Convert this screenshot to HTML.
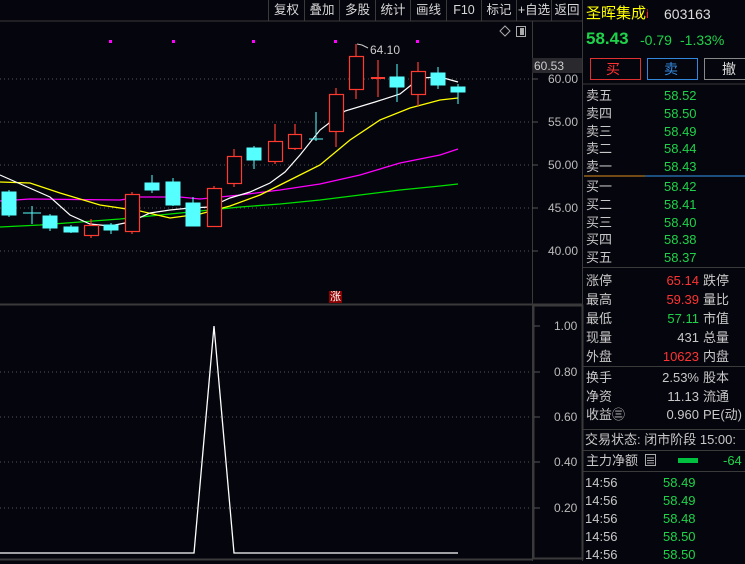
<!DOCTYPE html>
<html><head><meta charset="utf-8"><style>
*{margin:0;padding:0;box-sizing:border-box}
body{width:745px;height:561px;background:#05050d;overflow:hidden;position:relative;font-family:"Liberation Sans","Noto Sans CJK SC",sans-serif;font-size:13px;color:#c8c8c8}
.a{position:absolute;white-space:nowrap;line-height:16px}
.g{color:#1ed34a}.r{color:#ff3333}.w{color:#d0d0d0}
.tb{position:absolute;top:0;height:21px;line-height:20px;font-size:12.5px;color:#d8d8d8;text-align:center;border-left:1px solid #3a3a3a}
</style></head><body>
<svg class="a" style="left:0;top:0" width="745" height="561" xmlns="http://www.w3.org/2000/svg">
<g stroke="#555" stroke-dasharray="1,3">
<line x1="0" y1="79" x2="532" y2="79"/><line x1="0" y1="122" x2="532" y2="122"/><line x1="0" y1="165" x2="532" y2="165"/><line x1="0" y1="208" x2="532" y2="208"/><line x1="0" y1="251" x2="532" y2="251"/>
<line x1="0" y1="372" x2="532" y2="372"/><line x1="0" y1="417" x2="532" y2="417"/><line x1="0" y1="462" x2="532" y2="462"/><line x1="0" y1="508" x2="532" y2="508"/>
</g>
<line x1="0" y1="21" x2="582" y2="21" stroke="#3a3a3a"/>
<line x1="532.5" y1="21" x2="532.5" y2="561" stroke="#3a3a3a"/>
<line x1="582.5" y1="0" x2="582.5" y2="561" stroke="#3a3a3a"/>
<line x1="0" y1="304.5" x2="582" y2="304.5" stroke="#3a3a3a" stroke-width="2"/>
<rect x="533.5" y="305.5" width="49" height="253" fill="none" stroke="#3a3a3a" stroke-width="2"/>
<line x1="0" y1="559.5" x2="532" y2="559.5" stroke="#3a3a3a" stroke-width="2"/>
<rect x="532" y="58" width="50" height="15" fill="#2a2a2e"/>
<g stroke="#555"><line x1="532" y1="79" x2="538" y2="79"/><line x1="532" y1="122" x2="538" y2="122"/><line x1="532" y1="165" x2="538" y2="165"/><line x1="532" y1="208" x2="538" y2="208"/><line x1="532" y1="251" x2="538" y2="251"/></g>
<!-- MAs -->
<polyline fill="none" stroke="#00e000" stroke-width="1.3" points="0,227 40,225 80,222 120,219 160,215 200,211 240,207 280,204 320,200 360,195 400,190 440,186 458,184"/>
<polyline fill="none" stroke="#ff00ff" stroke-width="1.3" points="0,201 30,199 120,200 140,197 180,197 200,199 240,195 280,190 320,184 360,175 400,163 440,155 458,149"/>
<polyline fill="none" stroke="#ffff00" stroke-width="1.3" points="0,182 30,183 60,193 100,205 140,211 170,218 185,216 200,214 230,206 260,195 290,180 320,165 350,140 380,120 410,108 440,100 458,98"/>
<polyline fill="none" stroke="#ffffff" stroke-width="1.2" points="0,175 25,186 50,197 70,215 90,224 110,226 130,222 150,213 170,210 190,208 210,207 230,198 250,192 270,183 285,172 300,155 320,130 345,111 375,102 400,94 420,78 440,77 458,82"/>
<!-- candles -->
<g stroke="#5ff" fill="#5ff">
<line x1="9" y1="190" x2="9" y2="217"/><rect x="2" y="192" width="14" height="23"/>
<line x1="23" y1="213" x2="41" y2="213"/><line x1="32" y1="206" x2="32" y2="224"/>
<line x1="50" y1="214" x2="50" y2="231"/><rect x="43" y="216" width="14" height="12"/>
<line x1="71" y1="225" x2="71" y2="233"/><rect x="64" y="227" width="14" height="5"/>
<line x1="111" y1="223" x2="111" y2="234"/><rect x="104" y="225" width="14" height="5"/>
<line x1="152" y1="175" x2="152" y2="193"/><rect x="145" y="183" width="14" height="7"/>
<line x1="173" y1="178" x2="173" y2="206"/><rect x="166" y="182" width="14" height="23"/>
<line x1="193" y1="197" x2="193" y2="226"/><rect x="186" y="203" width="14" height="23"/>
<line x1="254" y1="146" x2="254" y2="169"/><rect x="247" y="148" width="14" height="12"/>
<line x1="309" y1="139" x2="323" y2="139"/><line x1="316" y1="112" x2="316" y2="141"/>
<line x1="397" y1="64" x2="397" y2="102"/><rect x="390" y="77" width="14" height="10"/>
<line x1="438" y1="67" x2="438" y2="89"/><rect x="431" y="73" width="14" height="12"/>
<line x1="458" y1="84" x2="458" y2="104"/><rect x="451" y="87" width="14" height="5"/>
</g>
<g stroke="#ff3b30" fill="#05050d" stroke-width="1.2">
<line x1="91" y1="219" x2="91" y2="238"/><rect x="84.5" y="225.5" width="14" height="10"/>
<line x1="132" y1="192" x2="132" y2="234"/><rect x="125.5" y="194.5" width="14" height="37"/>
<line x1="214" y1="186" x2="214" y2="227"/><rect x="207.5" y="188.5" width="14" height="38"/>
<line x1="234" y1="149" x2="234" y2="187"/><rect x="227.5" y="156.5" width="14" height="27"/>
<line x1="275" y1="124" x2="275" y2="164"/><rect x="268.5" y="141.5" width="14" height="20"/>
<line x1="295" y1="124" x2="295" y2="150"/><rect x="288.5" y="134.5" width="13" height="14"/>
<line x1="336" y1="88" x2="336" y2="147"/><rect x="329.5" y="94.5" width="14" height="37"/>
<line x1="356" y1="44" x2="356" y2="99"/><rect x="349.5" y="56.5" width="14" height="33"/>
<line x1="378" y1="60" x2="378" y2="97"/><line x1="371" y1="78" x2="385" y2="78" stroke-width="2"/>
<line x1="418" y1="62" x2="418" y2="106"/><rect x="411.5" y="71.5" width="14" height="23"/>
</g>
<polyline points="357,44 362,45 368,48" fill="none" stroke="#ccc"/>
<g fill="#f0f"><rect x="109" y="40" width="3" height="3"/><rect x="172" y="40" width="3" height="3"/><rect x="252" y="40" width="3" height="3"/><rect x="334" y="40" width="3" height="3"/><rect x="416" y="40" width="3" height="3"/></g>
<path d="M505 26 L510 31 L505 36 L500 31Z" fill="none" stroke="#aaa"/>
<rect x="516.5" y="26.5" width="9" height="10" fill="none" stroke="#aaa"/><rect x="520" y="28" width="4" height="7" fill="#aaa"/>
<rect x="329" y="291" width="13" height="12" fill="#8b0000"/>
<!-- indicator -->
<polyline fill="none" stroke="#fff" stroke-width="1.3" points="0,553 194,553 214,326 234,553 458,553"/>
<g stroke="#555"><line x1="534" y1="326" x2="540" y2="326"/><line x1="534" y1="372" x2="540" y2="372"/><line x1="534" y1="417" x2="540" y2="417"/><line x1="534" y1="462" x2="540" y2="462"/><line x1="534" y1="508" x2="540" y2="508"/></g>
<!-- right panel lines -->
<line x1="583" y1="84" x2="745" y2="84" stroke="#3a3a3a"/>
<line x1="584" y1="176" x2="645" y2="176" stroke="#e09020"/><line x1="645" y1="176" x2="745" y2="176" stroke="#3399ee"/>
<line x1="583" y1="267.5" x2="745" y2="267.5" stroke="#3a3a3a"/>
<line x1="583" y1="366.5" x2="745" y2="366.5" stroke="#3a3a3a"/>
<line x1="583" y1="429.5" x2="745" y2="429.5" stroke="#3a3a3a"/>
<line x1="583" y1="450.5" x2="745" y2="450.5" stroke="#3a3a3a"/>
<line x1="583" y1="471.5" x2="745" y2="471.5" stroke="#3a3a3a"/>
<rect x="590.5" y="58.5" width="50" height="21" fill="none" stroke="#e03030"/>
<rect x="647.5" y="58.5" width="50" height="21" fill="none" stroke="#3388dd"/>
<rect x="704.5" y="58.5" width="50" height="21" fill="none" stroke="#888"/>
<rect x="678" y="458" width="20" height="5" fill="#00c040"/>
<rect x="645.5" y="454.5" width="10" height="11" fill="none" stroke="#aaa"/>
<g stroke="#aaa"><line x1="647" y1="458" x2="654" y2="458"/><line x1="647" y1="460.5" x2="654" y2="460.5"/><line x1="647" y1="463" x2="654" y2="463"/></g>
</svg>
<div class="tb" style="left:268px;width:36px">复权</div>
<div class="tb" style="left:304px;width:35px">叠加</div>
<div class="tb" style="left:339px;width:36px">多股</div>
<div class="tb" style="left:375px;width:35px">统计</div>
<div class="tb" style="left:410px;width:36px">画线</div>
<div class="tb" style="left:446px;width:35px">F10</div>
<div class="tb" style="left:481px;width:35px">标记</div>
<div class="tb" style="left:516px;width:35px">+自选</div>
<div class="tb" style="left:551px;width:31px">返回</div>
<div class="a" style="left:370px;top:42px;color:#ccc;font-size:12px">64.10</div>
<div class="a" style="left:534px;top:58px;color:#ccc;font-size:12px">60.53</div>
<div class="a" style="left:548px;top:71px;color:#bbb;font-size:12px">60.00</div>
<div class="a" style="left:548px;top:114px;color:#bbb;font-size:12px">55.00</div>
<div class="a" style="left:548px;top:157px;color:#bbb;font-size:12px">50.00</div>
<div class="a" style="left:548px;top:200px;color:#bbb;font-size:12px">45.00</div>
<div class="a" style="left:548px;top:243px;color:#bbb;font-size:12px">40.00</div>
<div class="a" style="left:330px;top:289px;color:#fff;font-size:11px">涨</div>
<div class="a" style="left:554px;top:318px;color:#bbb;font-size:12px">1.00</div>
<div class="a" style="left:554px;top:364px;color:#bbb;font-size:12px">0.80</div>
<div class="a" style="left:554px;top:409px;color:#bbb;font-size:12px">0.60</div>
<div class="a" style="left:554px;top:454px;color:#bbb;font-size:12px">0.40</div>
<div class="a" style="left:554px;top:500px;color:#bbb;font-size:12px">0.20</div>

<div class="a" style="left:586px;top:6px;color:#ffff00;font-size:15px">圣晖集成<span class="r" style="font-size:12px">i</span></div>
<div class="a" style="left:664px;top:6px;color:#ddd;font-size:14px">603163</div>
<div class="a g" style="left:586px;top:31px;font-size:17px;font-weight:bold">58.43</div>
<div class="a g" style="left:640px;top:32px;font-size:14px">-0.79</div>
<div class="a g" style="left:680px;top:32px;font-size:14px">-1.33%</div>
<div class="a r" style="left:606px;top:61px;font-size:14px">买</div>
<div class="a" style="left:664px;top:61px;font-size:14px;color:#3388dd">卖</div>
<div class="a" style="left:722px;top:61px;font-size:14px;color:#ddd">撤</div>

<div class="a" style="left:586px;top:87px;line-height:17.8px">卖五<br>卖四<br>卖三<br>卖二<br>卖一</div>
<div class="a g" style="left:664px;top:87px;line-height:17.8px">58.52<br>58.50<br>58.49<br>58.44<br>58.43</div>
<div class="a" style="left:586px;top:178px;line-height:17.8px">买一<br>买二<br>买三<br>买四<br>买五</div>
<div class="a g" style="left:664px;top:178px;line-height:17.8px">58.42<br>58.41<br>58.40<br>58.38<br>58.37</div>

<div class="a" style="left:586px;top:271px;line-height:19px">涨停<br>最高<br>最低<br>现量<br>外盘</div>
<div class="a" style="left:610px;top:271px;line-height:19px;width:89px;text-align:right"><span class="r">65.14</span><br><span class="r">59.39</span><br><span class="g">57.11</span><br>431<br><span class="r">10623</span></div>
<div class="a" style="left:703px;top:271px;line-height:19px">跌停<br>量比<br>市值<br>总量<br>内盘</div>
<div class="a" style="left:586px;top:369px;line-height:18.5px">换手<br>净资<br>收益㊂</div>
<div class="a" style="left:610px;top:369px;line-height:18.5px;width:89px;text-align:right">2.53%<br>11.13<br>0.960</div>
<div class="a" style="left:703px;top:369px;line-height:18.5px">股本<br>流通<br>PE(动)</div>
<div class="a" style="left:585px;top:432px">交易状态: 闭市阶段 15:00:</div>
<div class="a" style="left:586px;top:453px">主力净额</div>
<div class="a g" style="left:723px;top:453px">-64</div>
<div class="a" style="left:585px;top:474px;line-height:18px">14:56<br>14:56<br>14:56<br>14:56<br>14:56</div>
<div class="a g" style="left:663px;top:474px;line-height:18px">58.49<br>58.49<br>58.48<br>58.50<br>58.50</div>
</body></html>
